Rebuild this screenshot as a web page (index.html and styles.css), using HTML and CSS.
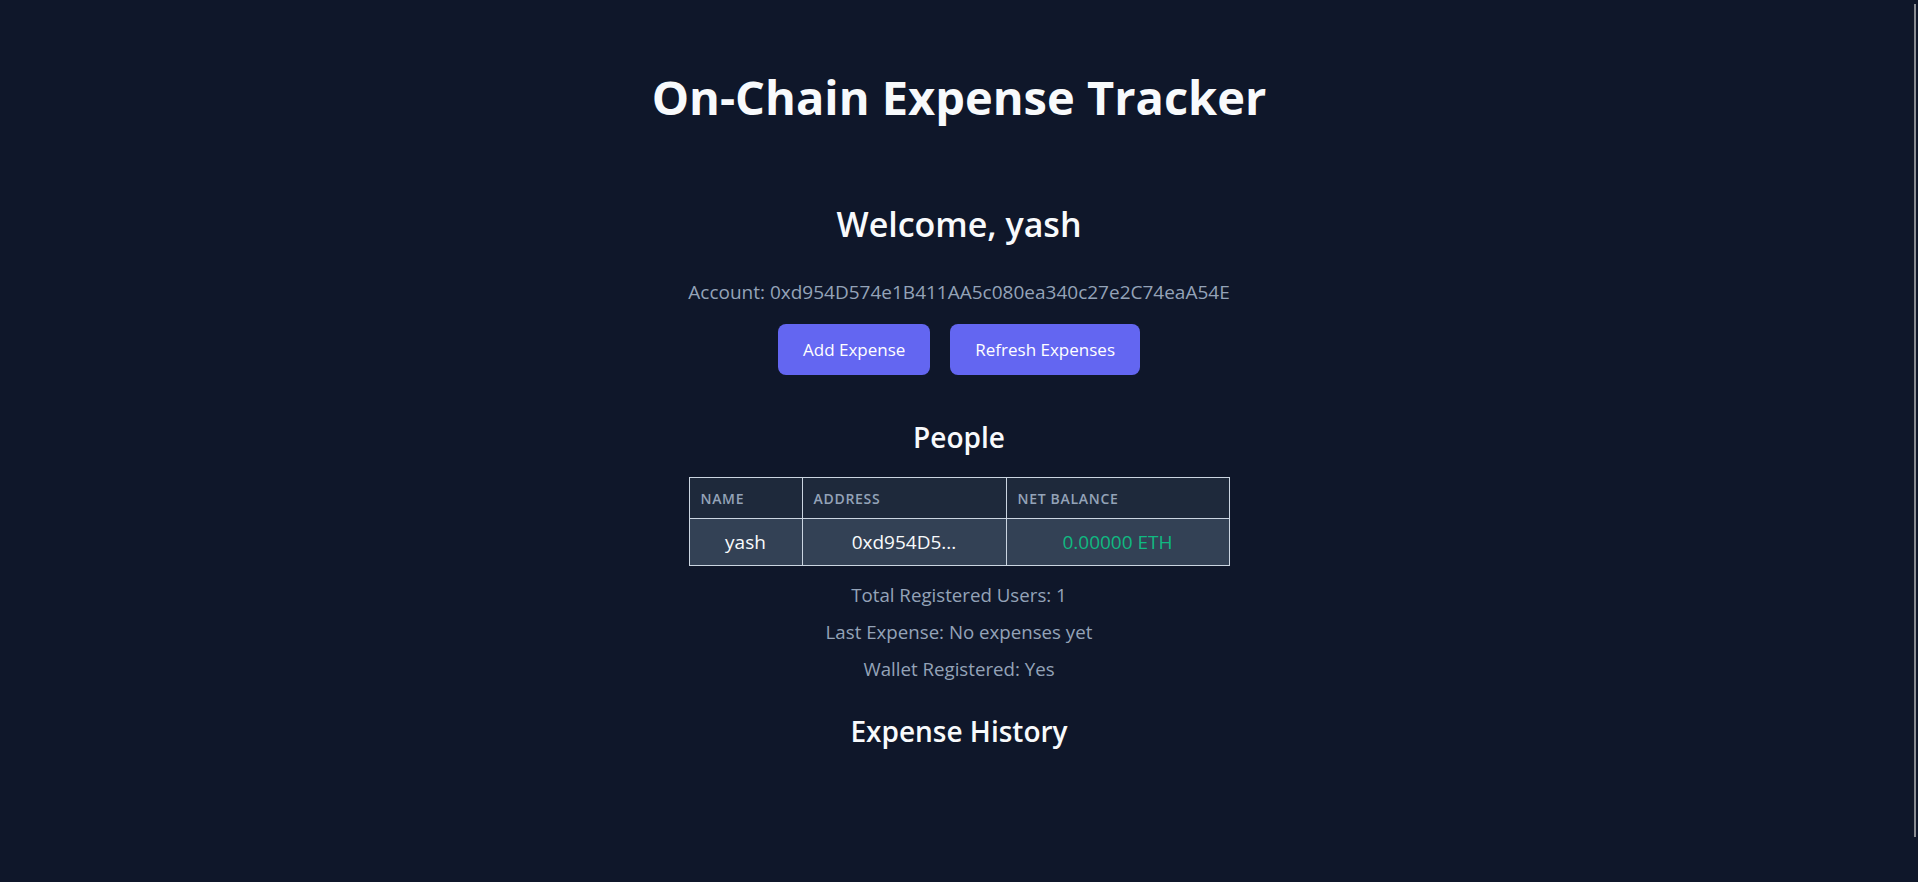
FILE: index.html
```html
<!DOCTYPE html>
<html lang="en">
<head>
<meta charset="utf-8">
<title>On-Chain Expense Tracker</title>
<link rel="stylesheet" href="styles.css">
</head>
<body>
<div class="scroll-thumb"></div>
<main class="app">
  <h1 class="title">On-Chain Expense Tracker</h1>
  <h2 class="welcome">Welcome, yash</h2>
  <p class="account">Account: 0xd954D574e1B411AA5c080ea340c27e2C74eaA54E</p>
  <div class="actions">
    <button class="btn">Add Expense</button>
    <button class="btn">Refresh Expenses</button>
  </div>
  <h3 class="section-title people-title">People</h3>
  <table class="people">
    <thead>
      <tr>
        <th class="col-name">Name</th>
        <th class="col-address">Address</th>
        <th class="col-balance">Net Balance</th>
      </tr>
    </thead>
    <tbody>
      <tr>
        <td>yash</td>
        <td>0xd954D5...</td>
        <td class="balance">0.00000 ETH</td>
      </tr>
    </tbody>
  </table>
  <div class="stats">
    <p class="stat">Total Registered Users: 1</p>
    <p class="stat">Last Expense: No expenses yet</p>
    <p class="stat">Wallet Registered: Yes</p>
  </div>
  <h3 class="section-title history-title">Expense History</h3>
</main>
</body>
</html>
```
FILE: styles.css
```css
* { box-sizing: border-box; }

html, body {
  margin: 0;
  padding: 0;
  height: 100%;
  overflow: hidden;
}

body {
  background: #0f172a;
  color: #f8fafc;
  font-family: "Open Sans", "Noto Sans", sans-serif;
}

.scroll-thumb {
  position: fixed;
  right: 2px;
  top: 4px;
  width: 2px;
  height: 833px;
  background: #8a8d93;
}

.app {
  display: flex;
  flex-direction: column;
  align-items: center;
  text-align: center;
  padding-top: 68px;
}

.title {
  margin: 0;
  font-size: 47px;
  line-height: 58px;
  font-weight: 700;
  color: #f8fafc;
}

.welcome {
  margin: 77px 0 0;
  font-size: 34px;
  line-height: 42px;
  font-weight: 600;
  color: #f8fafc;
}

.account {
  margin: 33px 0 0;
  font-size: 19px;
  line-height: 28px;
  color: #94a3b8;
}

.actions {
  display: flex;
  gap: 20px;
  margin-top: 18px;
}

.btn {
  font-family: "Open Sans", "Noto Sans", sans-serif;
  font-size: 17px;
  line-height: 27px;
  padding: 12px 25px;
  border: none;
  border-radius: 8px;
  background: #6366f1;
  color: #ffffff;
  cursor: pointer;
}

.section-title {
  margin: 0;
  font-size: 28px;
  line-height: 34px;
  font-weight: 600;
  color: #f8fafc;
}

.people-title { margin-top: 45px; }

.people {
  margin-top: 23px;
  width: 540px;
  border-collapse: collapse;
  table-layout: fixed;
}

.people th,
.people td {
  border: 1px solid #cbd5e1;
}

.people th {
  background: #1e293b;
  height: 41px;
  padding: 0 11px;
  text-align: left;
  font-size: 14px;
  font-weight: 600;
  letter-spacing: 0.05em;
  text-transform: uppercase;
  color: #94a3b8;
}

.people td {
  background: #334155;
  height: 47px;
  padding: 0 11px;
  text-align: center;
  font-size: 19px;
  color: #f8fafc;
}

.col-name { width: 113px; }
.col-address { width: 204px; }
.col-balance { width: 223px; }

.people td.balance { color: #10b981; }

.stats {
  display: flex;
  flex-direction: column;
  gap: 10px;
  margin-top: 15px;
}

.stat {
  margin: 0;
  font-size: 18.7px;
  line-height: 27px;
  color: #94a3b8;
}

.history-title { margin-top: 32px; }
```
